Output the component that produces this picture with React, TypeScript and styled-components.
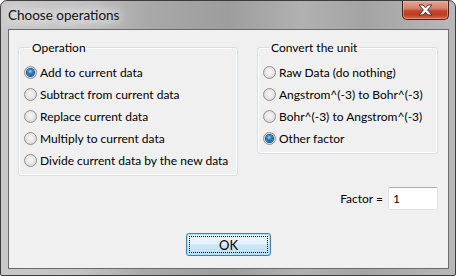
import styled, { createGlobalStyle } from "styled-components";

const GlobalStyle = createGlobalStyle`
    html, body {
        margin: 0;
        padding: 0;
        background: #ffffff;
    }
    body {
        font-family: Lato, "Liberation Sans", sans-serif;
    }
`;

const operations = [
    "Add to current data",
    "Subtract from current data",
    "Replace current data",
    "Multiply to current data",
    "Divide current data by the new data",
];

const units = [
    "Raw Data (do nothing)",
    "Angstrom^(-3) to Bohr^(-3)",
    "Bohr^(-3) to Angstrom^(-3)",
    "Other factor",
];

function Radio({ label, checked }: { label: string; checked?: boolean }) {
    return (
        <RadioRow>
            <RadioDot $checked={!!checked} />
            <span>{label}</span>
        </RadioRow>
    );
}

export default function App() {
    return (
        <>
            <GlobalStyle />
            <Window>
                <TitleBar>
                    <Title>Choose operations</Title>
                    <CloseButton>
                        <svg width="15" height="12" viewBox="0 0 15 12">
                            <path
                                d="M1 1 H5 L7.5 3.8 L10 1 H14 L9.6 6 L14 11 H10 L7.5 8.2 L5 11 H1 L5.4 6 Z"
                                fill="#ffffff"
                                stroke="#3b3b3b"
                                strokeWidth="1"
                                strokeLinejoin="round"
                            />
                        </svg>
                    </CloseButton>
                </TitleBar>
                <Client>
                    <GroupsRow>
                        <GroupBox $width={220}>
                            <Legend>Operation</Legend>
                            {operations.map((op, i) => (
                                <Radio key={op} label={op} checked={i === 0} />
                            ))}
                        </GroupBox>
                        <GroupBox $width={181}>
                            <Legend>Convert the unit</Legend>
                            {units.map((u, i) => (
                                <Radio key={u} label={u} checked={i === units.length - 1} />
                            ))}
                        </GroupBox>
                    </GroupsRow>
                    <FactorRow>
                        <span>Factor =</span>
                        <FactorInput defaultValue="1" />
                    </FactorRow>
                    <ButtonRow>
                        <OkButton>
                            <FocusRect>OK</FocusRect>
                        </OkButton>
                    </ButtonRow>
                </Client>
            </Window>
        </>
    );
}

const Window = styled.div`
    width: 456px;
    height: 276px;
    box-sizing: border-box;
    border: 1px solid #3c3c3c;
    border-radius: 7px 7px 2px 2px;
    padding: 0 6px 6px 7px;
    display: flex;
    flex-direction: column;
    background: linear-gradient(
        90deg,
        #c9c9c9 0%,
        #c2c2c2 18%,
        #a9a9a9 32%,
        #9d9d9d 50%,
        #b1b1b1 66%,
        #a4a4a4 80%,
        #b8b8b8 100%
    );
`;

const TitleBar = styled.div`
    height: 28px;
    display: flex;
    justify-content: space-between;
    align-items: flex-start;
    flex-shrink: 0;
`;

const Title = styled.div`
    margin-top: 6px;
    font-size: 13.5px;
    line-height: 17px;
    color: #111;
    text-shadow: 0 0 8px #f2f2f2, 0 0 12px #eeeeee, 0 0 16px #e8e8e8;
`;

const CloseButton = styled.div`
    width: 47px;
    height: 19px;
    box-sizing: border-box;
    border: 1px solid #4a2118;
    border-top: none;
    border-radius: 0 0 5px 5px;
    display: flex;
    align-items: center;
    justify-content: center;
    background: linear-gradient(
        180deg,
        #e6a592 0%,
        #d7826d 40%,
        #c4452c 55%,
        #c03a20 75%,
        #d86a4f 100%
    );
    box-shadow: inset 0 0 0 1px rgba(255, 200, 180, 0.45);
`;

const Client = styled.div`
    flex: 1;
    box-sizing: border-box;
    border: 1px solid #6a6a6a;
    background: #f0f0f0;
    padding: 10px 9px 0 9px;
    display: flex;
    flex-direction: column;
    font-size: 12px;
    color: #000;
`;

const GroupsRow = styled.div`
    display: flex;
    align-items: flex-start;
    gap: 19px;
`;

const GroupBox = styled.fieldset<{ $width: number }>`
    width: ${(p) => p.$width}px;
    min-width: 0;
    box-sizing: border-box;
    margin: 0;
    padding: 6px 0 4px 5px;
    border: 1px solid #d5dfe5;
    border-radius: 3px;
    box-shadow: inset 0 0 0 1px #ffffff;
`;

const Legend = styled.legend`
    margin-left: 6px;
    padding: 0 2px;
    font-size: 12px;
    line-height: 15px;
`;

const RadioRow = styled.div`
    height: 22px;
    display: flex;
    align-items: center;
    gap: 3px;
    white-space: nowrap;
`;

const RadioDot = styled.span<{ $checked: boolean }>`
    width: 13px;
    height: 13px;
    box-sizing: border-box;
    border-radius: 50%;
    border: 1px solid #8e9092;
    background: radial-gradient(circle at 50% 45%, #f8f8f8 0%, #e8e8e8 45%, #cdcdcd 100%);
    display: flex;
    align-items: center;
    justify-content: center;
    flex-shrink: 0;

    &::after {
        content: "";
        display: ${(p) => (p.$checked ? "block" : "none")};
        width: 7px;
        height: 7px;
        border-radius: 50%;
        background: radial-gradient(circle at 45% 35%, #9fe2fb 0%, #2a86cc 35%, #0b3f7e 100%);
        box-shadow: 0 0 0 1px #1c4a7a;
    }
`;

const FactorRow = styled.div`
    margin-top: 11px;
    padding-right: 1px;
    display: flex;
    justify-content: flex-end;
    align-items: center;
    gap: 5px;
`;

const FactorInput = styled.input`
    width: 50px;
    height: 23px;
    box-sizing: border-box;
    border: 1px solid #e2e3ea;
    border-top-color: #abadb3;
    border-radius: 2px;
    background: #fff;
    padding: 0 4px;
    font-family: Lato, "Liberation Sans", sans-serif;
    font-size: 12px;
    color: #1a0000;
    outline: none;
`;

const ButtonRow = styled.div`
    margin-top: 23px;
    display: flex;
    justify-content: center;
`;

const OkButton = styled.button`
    width: 85px;
    height: 23px;
    box-sizing: border-box;
    padding: 2px;
    border: 1px solid #3c7fb1;
    border-radius: 3px;
    background: linear-gradient(180deg, #eef7fd 0%, #e3f2fb 48%, #cbe7f7 52%, #bfe0f3 100%);
    box-shadow: inset 0 0 0 1px #a8e4fb;
    font-family: Lato, "Liberation Sans", sans-serif;
    font-size: 13px;
    color: #000;
    display: flex;
`;

const FocusRect = styled.span`
    flex: 1;
    border: 1px dotted #000;
    display: flex;
    align-items: center;
    justify-content: center;
`;
